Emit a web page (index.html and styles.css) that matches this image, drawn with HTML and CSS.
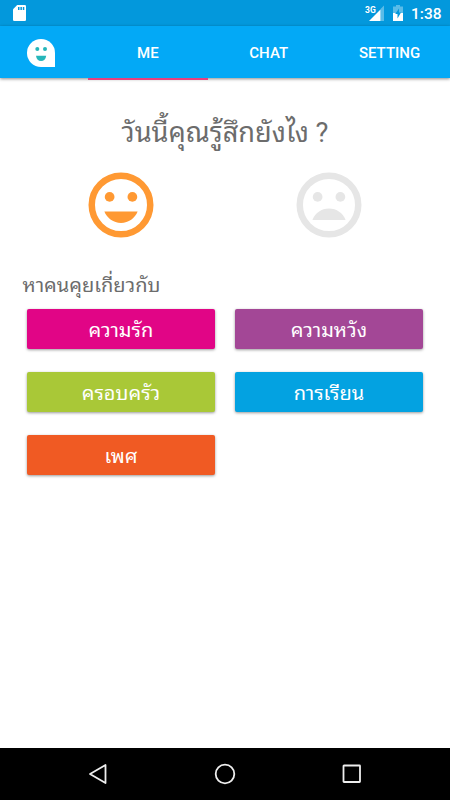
FILE: index.html
```html
<!DOCTYPE html>
<html lang="th">
<head>
<meta charset="utf-8">
<title>Me</title>
<link rel="stylesheet" href="styles.css">
</head>
<body>
<div class="screen">
  <header class="status">
    <svg class="sd" width="13" height="16" viewBox="0 0 13 16"><path fill="#fff" d="M4.2 0H11.700Q13 0 13 1.300V14.700Q13 16 11.700 16H1.300Q0 16 0 14.700V4.200Z"/><path fill="#0398dc" d="M5 2h1.500v3H5zM7.400 2h1.500v3H7.400zM9.800 2h1.500v3H9.800z"/></svg>
    <div class="status-right">
      <svg class="signal" width="20" height="17" viewBox="0 0 20 17"><path fill="#fff" fill-opacity=".35" d="M19 .5V16H15.500V4Z"/><path fill="#fff" d="M15.500 4.500V16H4Z"/><text class="net" x="0" y="7.500">3G</text></svg>
      <svg class="battery" width="10" height="16" viewBox="0 0 10 16"><path fill="#fff" fill-opacity=".35" d="M3 0H7V1.500H10V8H0V1.500H3Z"/><path fill="#fff" d="M0 8H10V16H0Z"/><path fill="#0398dc" d="M6 3.500L2.200 9H4.500V13.500L8 7.500H6Z"/></svg>
      <span class="clock">1:38</span>
    </div>
  </header>
  <nav class="tabs">
    <div class="logo"><svg width="28" height="28" viewBox="0 0 28 28"><path fill="#fff" d="M14 0A14 14 0 0 1 28 14V28H14A14 14 0 0 1 14 0Z"/><g fill="#26b6ba"><circle cx="10.300" cy="10" r="2"/><circle cx="18" cy="10" r="2"/><path d="M9 16.700H19.200C18.800 20 16.800 22 14.100 22S9.400 20 9 16.700Z"/></g></svg></div>
    <div class="tab active">ME</div>
    <div class="tab">CHAT</div>
    <div class="tab">SETTING</div>
  </nav>
  <main class="content">
    <h1 class="question">วันนี้คุณรู้สึกยังไง ?</h1>
    <div class="moods">
      <svg class="happy" viewBox="0 0 24 24"><circle class="ring" cx="12" cy="12" r="9"/><circle cx="8.500" cy="9.500" r="1.500"/><circle cx="15.500" cy="9.500" r="1.500"/><path d="M12 17.500c2.330 0 4.310-1.460 5.110-3.500H6.890c.8 2.040 2.780 3.500 5.110 3.500z"/></svg>
      <svg class="sad" viewBox="0 0 24 24"><circle class="ring" cx="12" cy="12" r="9"/><circle cx="8.500" cy="9.500" r="1.500"/><circle cx="15.500" cy="9.500" r="1.500"/><path d="M12 13.100c-2.330 0-4.310 1.460-5.110 3.500h10.220c-.8-2.040-2.780-3.500-5.110-3.500z"/></svg>
    </div>
    <h2 class="subject">หาคนคุยเกี่ยวกับ</h2>
    <div class="topics">
      <button class="topic love">ความรัก</button>
      <button class="topic hope">ความหวัง</button>
      <button class="topic family">ครอบครัว</button>
      <button class="topic study">การเรียน</button>
      <button class="topic gender">เพศ</button>
    </div>
  </main>
  <footer class="navbar">
    <svg width="20" height="22" viewBox="0 0 20 22"><path d="M17.500 2V20L2 11Z"/></svg>
    <svg width="22" height="22" viewBox="0 0 22 22"><circle cx="11" cy="11" r="9.300"/></svg>
    <svg width="20" height="20" viewBox="0 0 20 20"><rect x="1.500" y="1.500" width="16.500" height="16.500" rx=".5"/></svg>
  </footer>
</div>
</body>
</html>
```
FILE: styles.css
```css
* { box-sizing: border-box; }
body { margin: 0; font-family: Roboto, "Noto Sans Thai Looped", "Noto Looped Thai", "Droid Sans Thai", Loma, Waree, Garuda, "Noto Sans Thai", sans-serif; }
.screen { width: 450px; height: 800px; display: flex; flex-direction: column; background: #fff; overflow: hidden; }
.status { height: 26px; flex: none; background: #0398dc; display: flex; justify-content: space-between; padding: 5px 9px 0 13px; }
.status-right { display: flex; align-items: flex-start; }
.battery { margin-left: 8px; }
.net { font-size: 8.5px; font-weight: 700; fill: #fff; }
.clock { margin-left: 8px; width: 30px; color: #fff; font-size: 15.5px; font-weight: 500; line-height: 18px; white-space: nowrap; }
.tabs { height: 52px; flex: none; display: grid; grid-template-columns: 87.500px 120.800px 120.800px 120.900px; background: #03a9f6; color: #fff; box-shadow: 0 1px 3px rgba(0, 0, 0, .45); }
.logo { padding: 13px 0 0 27px; }
.tab { text-align: center; font-size: 15px; font-weight: 500; line-height: 54px; }
.active { box-shadow: inset 0 -2px #e8407f; }
.content { flex: 1; }
.question { margin: 35px 0 0; height: 39px; line-height: 40px; text-align: center; font-size: 27.2px; font-weight: 400; color: #6c6c6c; }
.moods { display: grid; grid-template-columns: 208px 208px; padding: 14px 0 0 17px; justify-items: center; }
.moods svg { width: 78px; height: 78px; }
.ring { stroke-width: 2; }
.happy { fill: #ff9933; }
.happy .ring { stroke: #ff9933; fill: none; }
.sad { fill: #e6e6e6; }
.sad .ring { stroke: #e6e6e6; fill: none; }
.subject { margin: 26px 0 0 22.5px; height: 30px; line-height: 31px; font-size: 20px; font-weight: 400; color: #6c6c6c; }
.topics { display: grid; grid-template-columns: 188.500px 188.500px; grid-auto-rows: 40px; gap: 23.300px 19.500px; padding: 8.700px 0 0 26.700px; }
.topic { border: 0; border-radius: 2px; padding: 0; color: #fff; font-family: inherit; font-size: 20px; line-height: 42px; box-shadow: 0 1px 3px rgba(0, 0, 0, .4); }
.love { background: #e10586; }
.hope { background: #a34796; }
.family { background: #a9c837; }
.study { background: #03a2e1; }
.gender { background: #f05a23; }
.navbar { height: 52px; flex: none; background: #000; display: flex; align-items: center; justify-content: space-between; padding: 0 88px; }
.navbar svg { fill: none; stroke: #eee; stroke-width: 1.8; stroke-linejoin: round; }
```
